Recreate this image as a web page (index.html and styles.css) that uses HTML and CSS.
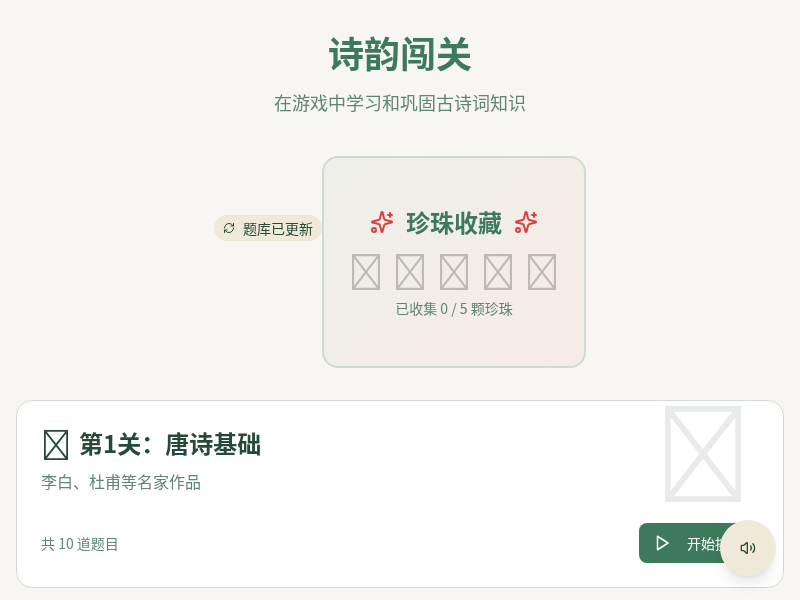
FILE: index.html
```html
<!DOCTYPE html>
<html lang="zh">
<head>
    <title>诗韵闯关</title>
    <meta name="viewport" content="width=device-width, initial-scale=1">
    <link rel="stylesheet" href="styles.css">
</head>
<body>
    <svg class="defs" width="0" height="0">
        <symbol id="pic" viewBox="0 0 80 100" preserveAspectRatio="none">
            <path d="M3 3H77V97H3ZM3 3L77 97M77 3L3 97" fill="none" stroke="currentColor" stroke-width="6"/>
        </symbol>
        <symbol id="sparkle" viewBox="0 0 24 24">
            <g fill="none" stroke="currentColor" stroke-width="2" stroke-linecap="round" stroke-linejoin="round">
                <path d="M9.937 15.5A2 2 0 0 0 8.5 14.063l-6.135-1.582a.5.5 0 0 1 0-.962L8.5 9.936A2 2 0 0 0 9.937 8.5l1.582-6.135a.5.5 0 0 1 .963 0L14.063 8.5A2 2 0 0 0 15.5 9.937l6.135 1.581a.5.5 0 0 1 0 .964L15.5 14.063a2 2 0 0 0-1.437 1.437l-1.582 6.135a.5.5 0 0 1-.963 0z"/>
                <path d="M20 3v4M22 5h-4"/>
                <circle cx="4" cy="20" r="2"/>
            </g>
        </symbol>
    </svg>

    <div class="container">
        <header class="header">
            <h1>诗韵闯关</h1>
            <p>在游戏中学习和巩固古诗词知识</p>
        </header>

        <section class="pearl-wrap">
            <div class="pearl-card">
                <div class="update-badge">
                    <svg class="refresh" viewBox="0 0 24 24" fill="none" stroke="currentColor" stroke-width="2" stroke-linecap="round" stroke-linejoin="round">
                        <path d="M3 12a9 9 0 0 1 9-9 9.75 9.75 0 0 1 6.74 2.74L21 8"/>
                        <path d="M21 3v5h-5"/>
                        <path d="M21 12a9 9 0 0 1-9 9 9.75 9.75 0 0 1-6.74-2.74L3 16"/>
                        <path d="M8 16H3v5"/>
                    </svg>
                    <span>题库已更新</span>
                </div>
                <div class="pearl-title">
                    <svg class="sparkle"><use href="#sparkle"/></svg>
                    <h2>珍珠收藏</h2>
                    <svg class="sparkle"><use href="#sparkle"/></svg>
                </div>
                <div class="pearl-row">
                    <svg class="pearl"><use href="#pic"/></svg>
                    <svg class="pearl"><use href="#pic"/></svg>
                    <svg class="pearl"><use href="#pic"/></svg>
                    <svg class="pearl"><use href="#pic"/></svg>
                    <svg class="pearl"><use href="#pic"/></svg>
                </div>
                <p class="pearl-count">已收集 0 / 5 颗珍珠</p>
            </div>
        </section>

        <section class="level-card">
            <svg class="level-bg"><use href="#pic"/></svg>
            <div class="level-title">
                <svg class="level-icon"><use href="#pic"/></svg>
                <h3>第1关：唐诗基础</h3>
            </div>
            <p class="level-desc">李白、杜甫等名家作品</p>
            <div class="level-foot">
                <span class="level-num">共 10 道题目</span>
                <button class="start-btn">
                    <svg class="play" viewBox="0 0 24 24" fill="none" stroke="currentColor" stroke-width="2" stroke-linecap="round" stroke-linejoin="round">
                        <polygon points="6 3 20 12 6 21 6 3"/>
                    </svg>
                    <span>开始挑战</span>
                </button>
            </div>
        </section>
    </div>

    <button class="sound-btn">
        <svg class="volume" viewBox="0 0 24 24" fill="none" stroke="currentColor" stroke-width="2" stroke-linecap="round" stroke-linejoin="round">
            <path d="M11 4.702a.705.705 0 0 0-1.203-.498L6.413 7.587A1.4 1.4 0 0 1 5.416 8H3a1 1 0 0 0-1 1v6a1 1 0 0 0 1 1h2.416a1.4 1.4 0 0 1 .997.413l3.383 3.384A.705.705 0 0 0 11 19.298z"/>
            <path d="M16 9a5 5 0 0 1 0 6"/>
            <path d="M19.364 18.364a9 9 0 0 0 0-12.728"/>
        </svg>
    </button>
</body>
</html>
```

FILE: styles.css
```css
html, body {
    height: 100%;
}
body {
    font-family: "Noto Sans CJK SC", "Noto Sans", sans-serif;
    margin: 0;
    background-color: #f8f6f2;
    color: #264a3a;
    overflow: hidden;
}
.defs {
    position: absolute;
}
.container {
    padding: 30px 16px 0;
    will-change: transform;
}
.header {
    text-align: center;
}
.header h1 {
    margin: 0;
    font-size: 36px;
    line-height: 44px;
    font-weight: 700;
    color: #3d7a5c;
}
.header p {
    margin: 16px 0 0;
    font-size: 18px;
    line-height: 24px;
    color: #5f8573;
}
.pearl-wrap {
    display: flex;
    justify-content: center;
    margin-top: 42px;
    padding-left: 108px;
}
.pearl-card {
    position: relative;
    box-sizing: border-box;
    width: 264px;
    height: 212px;
    display: flex;
    flex-direction: column;
    align-items: center;
    justify-content: center;
    border: 2px solid #cfdad1;
    border-radius: 16px;
    background: linear-gradient(135deg, #eeefe9, #f6ebe6);
}
.update-badge {
    position: absolute;
    top: 57px;
    right: 262px;
    display: flex;
    align-items: center;
    gap: 8px;
    height: 26px;
    padding: 0 9px;
    border-radius: 13px;
    background-color: #efe9da;
    font-size: 14px;
    white-space: nowrap;
}
.refresh {
    width: 12px;
    height: 12px;
}
.pearl-title {
    display: flex;
    align-items: center;
    gap: 12px;
}
.pearl-title h2 {
    margin: 0;
    font-size: 24px;
    line-height: 32px;
    font-weight: 700;
    color: #3d7a5c;
}
.sparkle {
    width: 24px;
    height: 24px;
    color: #dc3c44;
}
.pearl-row {
    display: flex;
    gap: 16px;
    margin-top: 16px;
}
.pearl {
    width: 28px;
    height: 36px;
    color: #bdbab4;
}
.pearl-count {
    margin: 8px 0 0;
    font-size: 14px;
    line-height: 20px;
    color: #5f8573;
}
.level-card {
    position: relative;
    box-sizing: border-box;
    height: 188px;
    margin-top: 32px;
    padding: 24px;
    border: 1px solid #cfdad1;
    border-radius: 16px;
    background-color: #fff;
}
.level-bg {
    position: absolute;
    top: 5px;
    right: 42px;
    width: 76px;
    height: 96px;
    color: #e8ebe9;
}
.level-title {
    display: flex;
    align-items: center;
    gap: 11px;
    padding-left: 3px;
    margin-top: 3px;
}
.level-icon {
    width: 24px;
    height: 30px;
    color: #264a3a;
}
.level-title h3 {
    margin: 0;
    padding-bottom: 4px;
    font-size: 24px;
    line-height: 30px;
    font-weight: 700;
}
.level-desc {
    margin: 7px 0 0;
    font-size: 16px;
    line-height: 24px;
    color: #5f8573;
}
.level-foot {
    display: flex;
    align-items: center;
    justify-content: space-between;
    margin-top: 30px;
}
.level-num {
    font-size: 14px;
    color: #5f8573;
}
.start-btn {
    display: flex;
    align-items: center;
    gap: 16px;
    height: 40px;
    padding: 0 16px 0 14px;
    border: none;
    border-radius: 8px;
    background-color: #3d7a5c;
    color: #fff;
    font-family: inherit;
    font-size: 14px;
}
.play {
    width: 18px;
    height: 18px;
}
.sound-btn {
    position: fixed;
    right: 24px;
    bottom: 24px;
    width: 56px;
    height: 56px;
    display: flex;
    align-items: center;
    justify-content: center;
    padding: 0;
    border: none;
    border-radius: 50%;
    background-color: #efe9da;
    color: #264a3a;
    box-shadow: 0 10px 15px -3px rgba(0,0,0,0.1), 0 4px 6px -4px rgba(0,0,0,0.1);
}
.volume {
    width: 16px;
    height: 16px;
}
```
